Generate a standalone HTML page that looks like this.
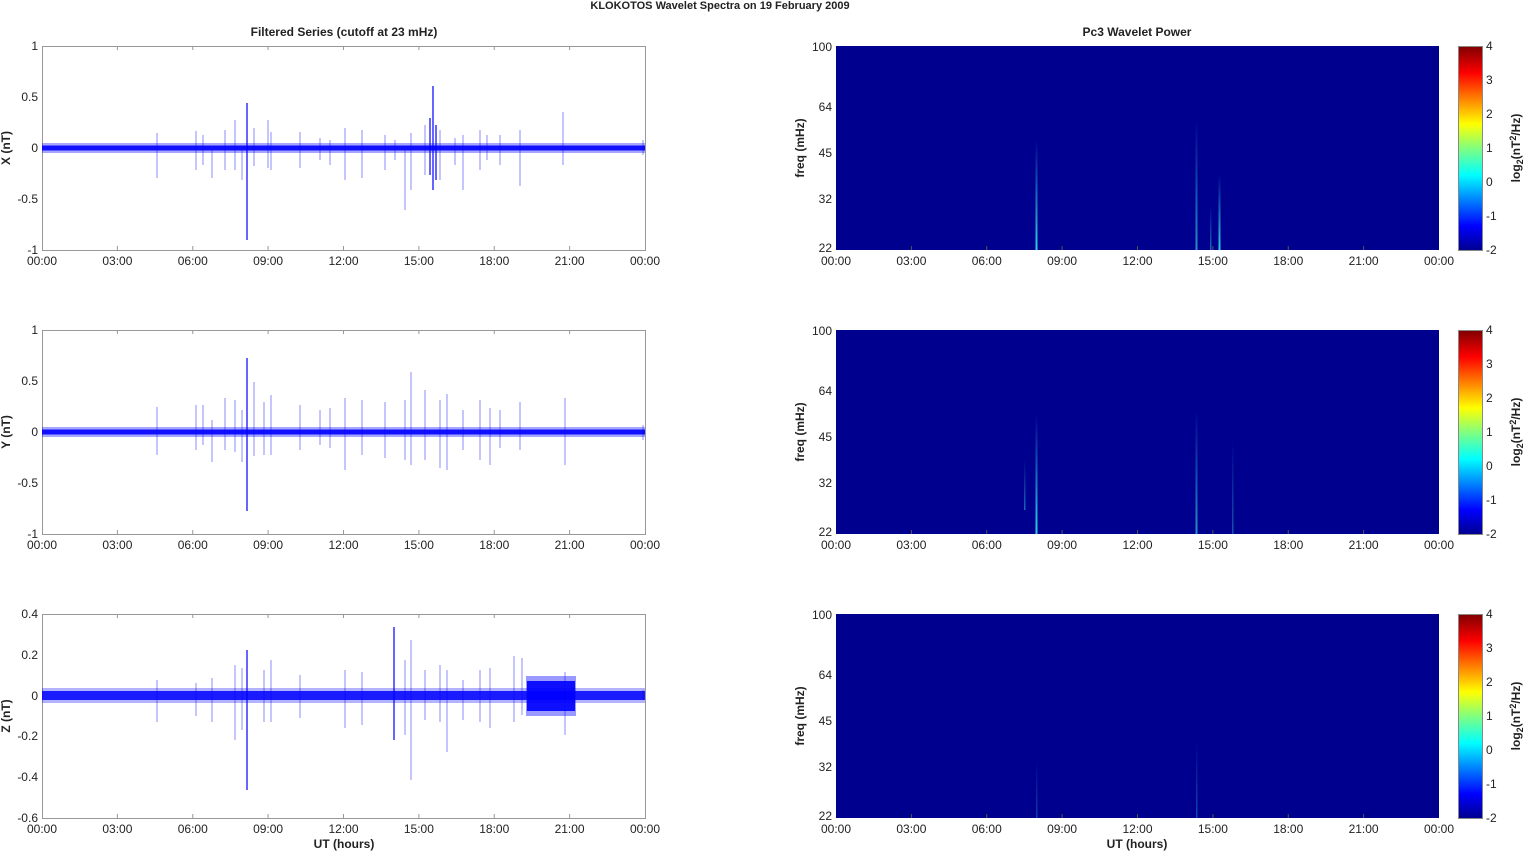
<!DOCTYPE html>
<html><head><meta charset="utf-8"><style>
html,body{margin:0;padding:0;background:#fff;width:1526px;height:851px;overflow:hidden}
svg text{font-family:"Liberation Sans",Arial,sans-serif;font-size:12px;fill:#222}
.b{font-weight:bold}
</style></head><body>
<svg width="1526" height="851" viewBox="0 0 1526 851" xmlns="http://www.w3.org/2000/svg">
<defs>
<linearGradient id="jet" x1="0" y1="1" x2="0" y2="0">
<stop offset="0" stop-color="#00008f"/><stop offset="0.12" stop-color="#0000ff"/>
<stop offset="0.37" stop-color="#00ffff"/><stop offset="0.5" stop-color="#80ff80"/>
<stop offset="0.62" stop-color="#ffff00"/><stop offset="0.87" stop-color="#ff0000"/>
<stop offset="1" stop-color="#800000"/></linearGradient>
<linearGradient id="streak" x1="0" y1="0" x2="0" y2="1">
<stop offset="0" stop-color="#00008f"/><stop offset="1" stop-color="#30d0e0"/></linearGradient>
</defs>
<text x="720" y="9" text-anchor="middle" class="b" style="font-size:11px">KLOKOTOS Wavelet Spectra on 19 February  2009</text>
<text x="344" y="36" text-anchor="middle" class="b">Filtered Series (cutoff at 23 mHz)</text>
<text x="1137" y="36" text-anchor="middle" class="b">Pc3 Wavelet Power</text>

<g stroke="#999" fill="none">
<rect x="42.5" y="46.5" width="603" height="204"/>
<rect x="42.5" y="330.5" width="603" height="204"/>
<rect x="42.5" y="614.5" width="603" height="204"/>
</g>
<!-- X panel -->
<rect x="42" y="143" width="603" height="10" fill="#0000ff" opacity="0.35"/>
<rect x="42" y="145.5" width="603" height="5" fill="#0000ff" opacity="0.9"/>
<path stroke="#0000ff" stroke-width="1" opacity="0.45" fill="none" d="M157 133V178M196 131V170M212 150V178M235 120V170M242 150V180M268 120V168M271 132V170M300 132V168M345 128V180M362 130V178M405 150V210M411 133V190M440 130V180M463 135V190M480 130V170M487 135V160M520 130V186M563 112V165M643 140V155M203 135V165M225 130V170M254 128V166M320 138V160M330 140V165M385 135V170M395 140V160M500 135V165M455 138V165M425 125V175"/>
<path stroke="#0000ff" stroke-width="1.2" fill="none" d="M247 103V240M433 86V190M430 118V175M436 125V180"/>
<!-- Y panel -->
<rect x="42" y="427" width="603" height="10" fill="#0000ff" opacity="0.35"/>
<rect x="42" y="429.5" width="603" height="5" fill="#0000ff" opacity="0.9"/>
<path stroke="#0000ff" stroke-width="1" opacity="0.45" fill="none" d="M157 407V455M196 405V450M212 420V462M235 400V452M242 410V462M264 402V455M271 395V455M300 405V450M345 398V470M362 400V455M405 400V460M411 372V465M425 390V460M440 400V468M447 394V470M463 410V450M480 400V460M490 408V465M520 402V450M565 398V465M643 425V440M203 405V445M225 398V450M254 382V456M320 410V445M330 408V448M385 402V458M500 410V448"/>
<path stroke="#0000ff" stroke-width="1.2" fill="none" d="M247 358V511"/>
<!-- Z panel -->
<rect x="42" y="688" width="603" height="15" fill="#0000ff" opacity="0.3"/>
<rect x="42" y="691" width="603" height="9" fill="#0000ff" opacity="0.85"/>
<rect x="526" y="676" width="50" height="40" fill="#0000ff" opacity="0.4"/>
<rect x="527" y="681" width="48" height="30" fill="#0000ff" opacity="0.9"/>
<path stroke="#0000ff" stroke-width="1" opacity="0.45" fill="none" d="M157 680V722M196 683V716M212 678V722M235 665V740M242 668V730M264 670V722M271 660V722M300 675V718M345 670V728M362 672V725M405 660V735M411 640V780M425 670V720M440 665V722M447 670V752M463 680V720M480 670V722M490 668V728M514 656V722M522 658V715M565 672V735M643 690V700"/>
<path stroke="#0000ff" stroke-width="1.2" fill="none" d="M247 650V790M394 627V740"/>
<g stroke="#999">
<path d="M117.4 46v4M192.75 46v4M268.1 46v4M343.5 46v4M418.9 46v4M494.25 46v4M569.6 46v4M117.4 250v-4M192.75 250v-4M268.1 250v-4M343.5 250v-4M418.9 250v-4M494.25 250v-4M569.6 250v-4"/>
<path d="M117.4 330v4M192.75 330v4M268.1 330v4M343.5 330v4M418.9 330v4M494.25 330v4M569.6 330v4M117.4 534v-4M192.75 534v-4M268.1 534v-4M343.5 534v-4M418.9 534v-4M494.25 534v-4M569.6 534v-4"/>
<path d="M117.4 614v4M192.75 614v4M268.1 614v4M343.5 614v4M418.9 614v4M494.25 614v4M569.6 614v4M117.4 818v-4M192.75 818v-4M268.1 818v-4M343.5 818v-4M418.9 818v-4M494.25 818v-4M569.6 818v-4"/>
</g>
<g text-anchor="middle">
<text x="42" y="265">00:00</text><text x="117.4" y="265">03:00</text><text x="192.75" y="265">06:00</text><text x="268.1" y="265">09:00</text><text x="343.5" y="265">12:00</text><text x="418.9" y="265">15:00</text><text x="494.25" y="265">18:00</text><text x="569.6" y="265">21:00</text><text x="645" y="265">00:00</text>
<text x="42" y="549">00:00</text><text x="117.4" y="549">03:00</text><text x="192.75" y="549">06:00</text><text x="268.1" y="549">09:00</text><text x="343.5" y="549">12:00</text><text x="418.9" y="549">15:00</text><text x="494.25" y="549">18:00</text><text x="569.6" y="549">21:00</text><text x="645" y="549">00:00</text>
<text x="42" y="833">00:00</text><text x="117.4" y="833">03:00</text><text x="192.75" y="833">06:00</text><text x="268.1" y="833">09:00</text><text x="343.5" y="833">12:00</text><text x="418.9" y="833">15:00</text><text x="494.25" y="833">18:00</text><text x="569.6" y="833">21:00</text><text x="645" y="833">00:00</text>
<text x="344" y="848" class="b">UT (hours)</text>
<text x="1137" y="848" class="b">UT (hours)</text>
</g>
<g text-anchor="end">
<text x="38" y="50">1</text><text x="38" y="101">0.5</text><text x="38" y="152">0</text><text x="38" y="203">-0.5</text><text x="38" y="254">-1</text>
<text x="38" y="334">1</text><text x="38" y="385">0.5</text><text x="38" y="436">0</text><text x="38" y="487">-0.5</text><text x="38" y="538">-1</text>
<text x="38" y="618">0.4</text><text x="38" y="659">0.2</text><text x="38" y="700">0</text><text x="38" y="740">-0.2</text><text x="38" y="781">-0.4</text><text x="38" y="822">-0.6</text>
</g>
<text class="b" transform="translate(10 148) rotate(-90)" text-anchor="middle">X (nT)</text>
<text class="b" transform="translate(10 432) rotate(-90)" text-anchor="middle">Y (nT)</text>
<text class="b" transform="translate(10 716) rotate(-90)" text-anchor="middle">Z (nT)</text>

<g fill="#00008f">
<rect x="836" y="46" width="603" height="204"/>
<rect x="836" y="330" width="603" height="204"/>
<rect x="836" y="614" width="603" height="204"/>
</g>
<rect x="1035.5" y="140" width="2" height="110" fill="url(#streak)"/>
<rect x="1195.5" y="120" width="2" height="130" fill="url(#streak)" opacity="0.7"/>
<rect x="1218.5" y="175" width="2" height="75" fill="url(#streak)"/>
<rect x="1210" y="205" width="1.5" height="45" fill="url(#streak)" opacity="0.5"/>
<rect x="1035.5" y="415" width="2" height="119" fill="url(#streak)"/>
<rect x="1024" y="460" width="1.5" height="50" fill="url(#streak)" opacity="0.5"/>
<rect x="1195.5" y="410" width="2" height="124" fill="url(#streak)" opacity="0.7"/>
<rect x="1232" y="440" width="1.5" height="94" fill="url(#streak)" opacity="0.4"/>
<rect x="1036" y="760" width="1.5" height="58" fill="url(#streak)" opacity="0.3"/>
<rect x="1196" y="740" width="1.5" height="78" fill="url(#streak)" opacity="0.35"/>
<g stroke="#555">
<path d="M911.4 250v-4M986.75 250v-4M1062.1 250v-4M1137.5 250v-4M1212.9 250v-4M1288.25 250v-4M1363.6 250v-4M911.4 534v-4M986.75 534v-4M1062.1 534v-4M1137.5 534v-4M1212.9 534v-4M1288.25 534v-4M1363.6 534v-4M911.4 818v-4M986.75 818v-4M1062.1 818v-4M1137.5 818v-4M1212.9 818v-4M1288.25 818v-4M1363.6 818v-4"/>
</g>
<g text-anchor="middle">
<text x="836" y="265">00:00</text><text x="911.4" y="265">03:00</text><text x="986.75" y="265">06:00</text><text x="1062.1" y="265">09:00</text><text x="1137.5" y="265">12:00</text><text x="1212.9" y="265">15:00</text><text x="1288.25" y="265">18:00</text><text x="1363.6" y="265">21:00</text><text x="1439" y="265">00:00</text>
<text x="836" y="549">00:00</text><text x="911.4" y="549">03:00</text><text x="986.75" y="549">06:00</text><text x="1062.1" y="549">09:00</text><text x="1137.5" y="549">12:00</text><text x="1212.9" y="549">15:00</text><text x="1288.25" y="549">18:00</text><text x="1363.6" y="549">21:00</text><text x="1439" y="549">00:00</text>
<text x="836" y="833">00:00</text><text x="911.4" y="833">03:00</text><text x="986.75" y="833">06:00</text><text x="1062.1" y="833">09:00</text><text x="1137.5" y="833">12:00</text><text x="1212.9" y="833">15:00</text><text x="1288.25" y="833">18:00</text><text x="1363.6" y="833">21:00</text><text x="1439" y="833">00:00</text>
</g>
<g text-anchor="end">
<text x="832" y="51">100</text><text x="832" y="111">64</text><text x="832" y="157">45</text><text x="832" y="203">32</text><text x="832" y="252">22</text>
<text x="832" y="335">100</text><text x="832" y="395">64</text><text x="832" y="441">45</text><text x="832" y="487">32</text><text x="832" y="536">22</text>
<text x="832" y="619">100</text><text x="832" y="679">64</text><text x="832" y="725">45</text><text x="832" y="771">32</text><text x="832" y="820">22</text>
</g>
<text class="b" transform="translate(804 148) rotate(-90)" text-anchor="middle">freq (mHz)</text>
<text class="b" transform="translate(804 432) rotate(-90)" text-anchor="middle">freq (mHz)</text>
<text class="b" transform="translate(804 716) rotate(-90)" text-anchor="middle">freq (mHz)</text>

<g stroke="#888">
<rect x="1458.5" y="46.5" width="24" height="204" fill="url(#jet)"/>
<rect x="1458.5" y="330.5" width="24" height="204" fill="url(#jet)"/>
<rect x="1458.5" y="614.5" width="24" height="204" fill="url(#jet)"/>
</g>
<g>
<text x="1486" y="50">4</text><text x="1486" y="84">3</text><text x="1486" y="118">2</text><text x="1486" y="152">1</text><text x="1486" y="186">0</text><text x="1486" y="220">-1</text><text x="1486" y="254">-2</text>
<text x="1486" y="334">4</text><text x="1486" y="368">3</text><text x="1486" y="402">2</text><text x="1486" y="436">1</text><text x="1486" y="470">0</text><text x="1486" y="504">-1</text><text x="1486" y="538">-2</text>
<text x="1486" y="618">4</text><text x="1486" y="652">3</text><text x="1486" y="686">2</text><text x="1486" y="720">1</text><text x="1486" y="754">0</text><text x="1486" y="788">-1</text><text x="1486" y="822">-2</text>
</g>
<text class="b" transform="translate(1520 148) rotate(-90)" text-anchor="middle">log<tspan dy="3" style="font-size:9px">2</tspan><tspan dy="-3">(nT</tspan><tspan dy="-4" style="font-size:9px">2</tspan><tspan dy="4">/Hz)</tspan></text>
<text class="b" transform="translate(1520 432) rotate(-90)" text-anchor="middle">log<tspan dy="3" style="font-size:9px">2</tspan><tspan dy="-3">(nT</tspan><tspan dy="-4" style="font-size:9px">2</tspan><tspan dy="4">/Hz)</tspan></text>
<text class="b" transform="translate(1520 716) rotate(-90)" text-anchor="middle">log<tspan dy="3" style="font-size:9px">2</tspan><tspan dy="-3">(nT</tspan><tspan dy="-4" style="font-size:9px">2</tspan><tspan dy="4">/Hz)</tspan></text>
</svg>
</body></html>
